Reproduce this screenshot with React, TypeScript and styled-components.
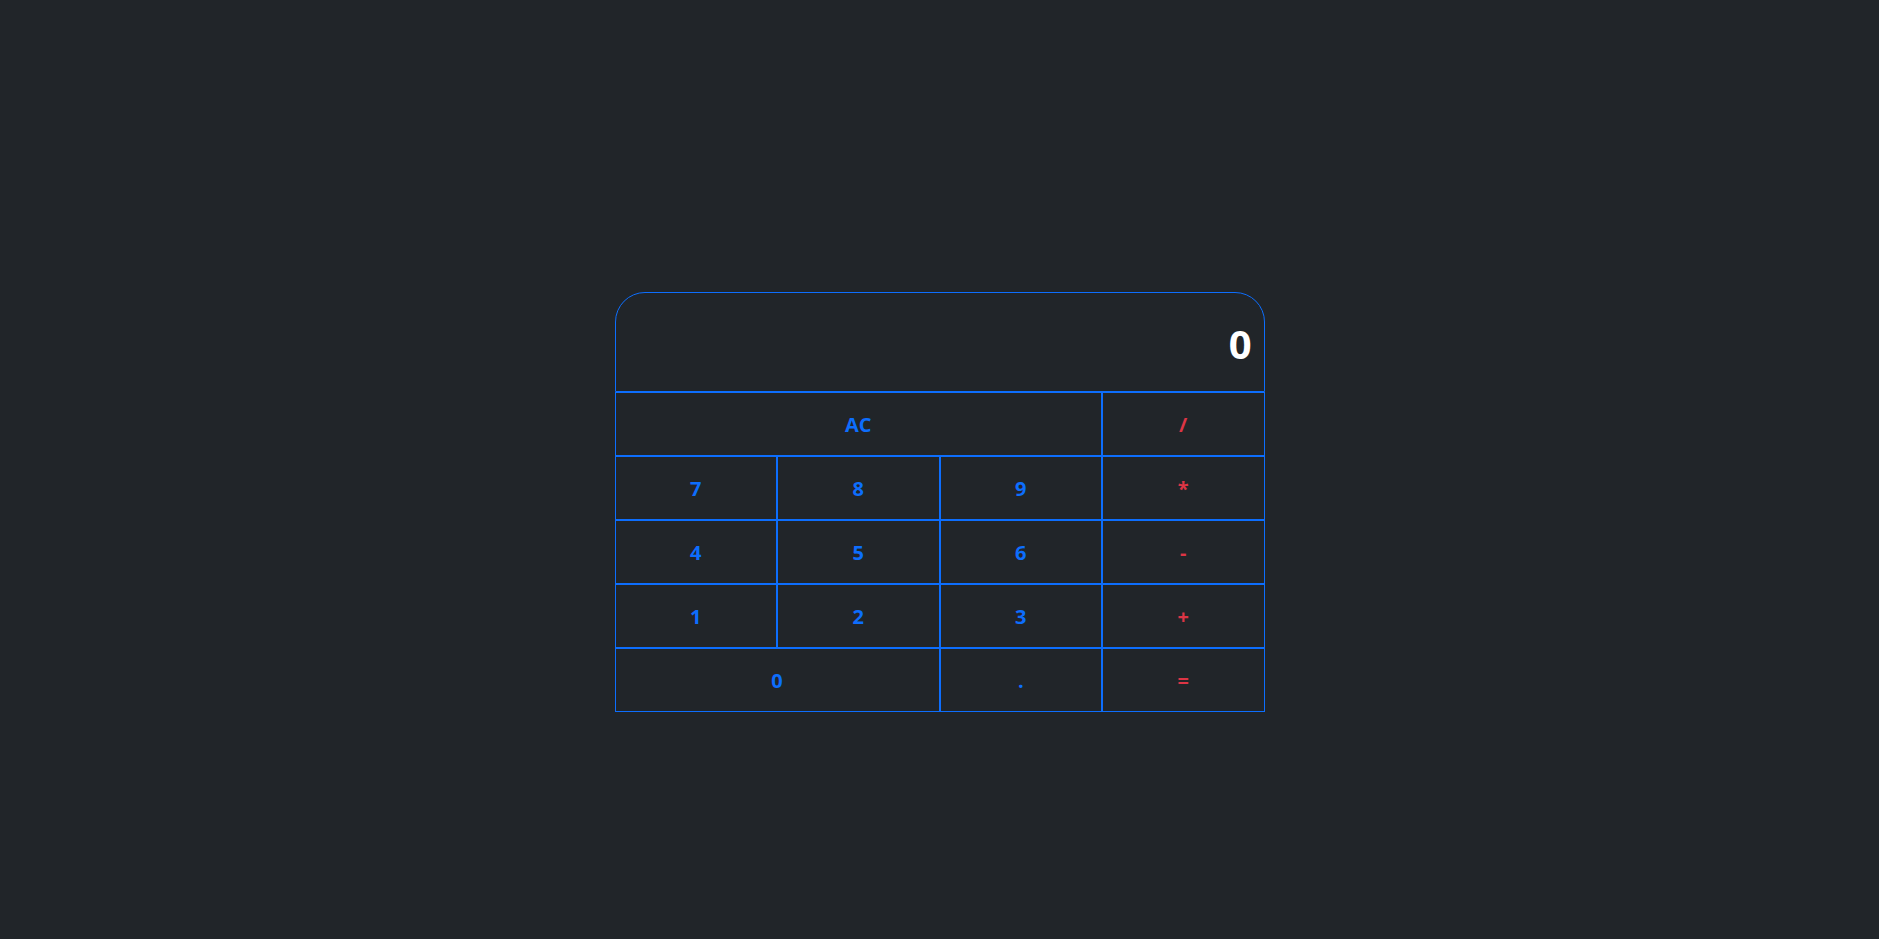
import React from "react";
import styled, { createGlobalStyle } from "styled-components";

const Global = createGlobalStyle`
  html, body {
    margin: 0;
    padding: 0;
    background: #212529;
    font-family: "Open Sans", "Noto Sans", sans-serif;
  }
`;

const Page = styled.div`
  display: flex;
  justify-content: center;
  padding-top: 292px;
  min-height: 939px;
  box-sizing: border-box;
`;

const Calculator = styled.div`
  width: 650px;
  display: flex;
  flex-direction: column;
`;

const Display = styled.div`
  height: 100px;
  box-sizing: border-box;
  border: 1px solid #0d6efd;
  border-radius: 30px 30px 0 0;
  display: flex;
  align-items: center;
  justify-content: flex-end;
  padding: 2px 12px 0;
  color: #ffffff;
  font-size: 40px;
  font-weight: 700;
`;

const Keys = styled.div`
  display: grid;
  grid-template-columns: repeat(4, 1fr);
  grid-auto-rows: 64px;
`;

const Key = styled.button<{ $span?: number; $op?: boolean }>`
  grid-column: span ${(p) => p.$span ?? 1};
  box-sizing: border-box;
  margin: 0;
  border: 1px solid #0d6efd;
  border-radius: 0;
  background: transparent;
  color: ${(p) => (p.$op ? "#dc3545" : "#0d6efd")};
  font-family: "Open Sans", "Noto Sans", sans-serif;
  font-size: 20px;
  font-weight: 700;
  cursor: pointer;
  padding: 0;
`;

const keys: { label: string; span?: number; op?: boolean }[] = [
  { label: "AC", span: 3 },
  { label: "/", op: true },
  { label: "7" },
  { label: "8" },
  { label: "9" },
  { label: "*", op: true },
  { label: "4" },
  { label: "5" },
  { label: "6" },
  { label: "-", op: true },
  { label: "1" },
  { label: "2" },
  { label: "3" },
  { label: "+", op: true },
  { label: "0", span: 2 },
  { label: "." },
  { label: "=", op: true },
];

export default function App() {
  return (
    <>
      <Global />
      <Page>
        <Calculator>
          <Display>0</Display>
          <Keys>
            {keys.map((k) => (
              <Key key={k.label} $span={k.span} $op={k.op}>
                {k.label}
              </Key>
            ))}
          </Keys>
        </Calculator>
      </Page>
    </>
  );
}
